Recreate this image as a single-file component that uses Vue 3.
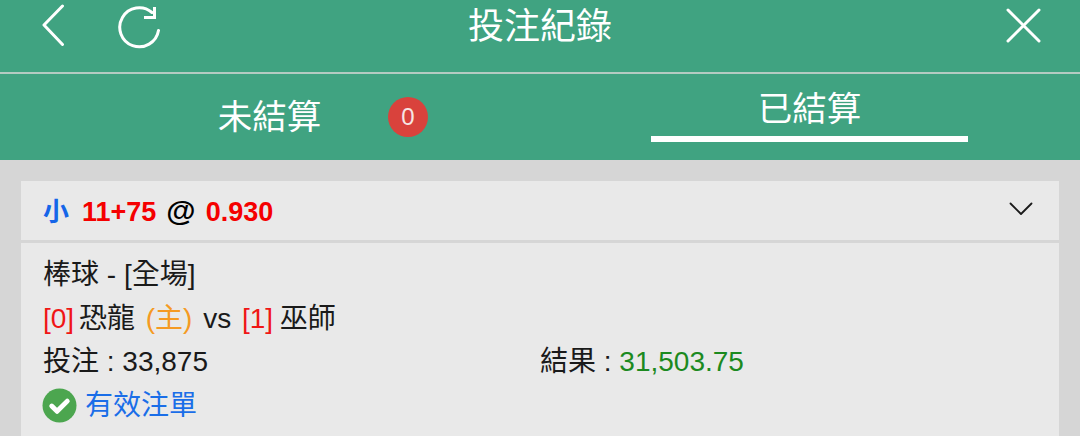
<script setup>
const title = '投注紀錄'
</script>

<template>
  <div class="page">
    <header class="topbar">
      <div class="left-icons">
        <svg class="ic back" width="24" height="42" viewBox="0 0 24 42" fill="none">
          <path d="M21.5 2 L3 21 L21.5 40.5" stroke="#fff" stroke-width="3" stroke-linecap="round" stroke-linejoin="round"/>
        </svg>
        <svg class="ic reload" width="46" height="46" viewBox="0 0 46 46" fill="none">
          <path d="M35 8.5 A19.5 19.5 0 1 0 41.5 26.5" stroke="#fff" stroke-width="3" stroke-linecap="round"/>
          <path d="M37.5 3 V13.5 H27" stroke="#fff" stroke-width="3" stroke-linecap="butt"/>
        </svg>
      </div>
      <h1 class="title">{{ title }}</h1>
      <svg class="ic close" width="36" height="36" viewBox="0 0 36 36" fill="none">
        <path d="M2 2 L33 33 M33 2 L2 33" stroke="#fff" stroke-width="3" stroke-linecap="round"/>
      </svg>
    </header>
    <nav class="tabs">
      <div class="tab">
        <span class="tab-label">未結算</span>
        <span class="badge">0</span>
      </div>
      <div class="tab active">
        <span class="tab-label">已結算</span>
      </div>
    </nav>
    <main class="content">
      <section class="card">
        <div class="card-head">
          <div class="bet">
            <span class="blue">小</span>
            <span class="red num">11+75</span>
            <span class="at">@</span>
            <span class="red">0.930</span>
          </div>
          <svg width="24" height="14" viewBox="0 0 24 14" fill="none">
            <path d="M1.5 1.5 L12 12 L22.5 1.5" stroke="#1a1a1a" stroke-width="1.8" stroke-linecap="round" stroke-linejoin="round"/>
          </svg>
        </div>
        <div class="card-body">
          <div class="line">棒球 - [全場]</div>
          <div class="line"><span class="r first">[0]</span> 恐龍 <span class="orange">(主)</span> vs <span class="r second">[1]</span> 巫師</div>
          <div class="line cols">
            <span class="col">投注 : 33,875</span>
            <span class="col">結果 : <span class="green">31,503.75</span></span>
          </div>
          <div class="line status">
            <svg width="35" height="35" viewBox="0 0 36 36">
              <circle cx="18" cy="18" r="17.5" fill="#4ca64f"/>
              <path d="M10 18.5 L15.5 24 L26 13.5" fill="none" stroke="#fff" stroke-width="5" stroke-linecap="round" stroke-linejoin="round"/>
            </svg>
            <span class="valid">有效注單</span>
          </div>
        </div>
      </section>
    </main>
  </div>
</template>

<style>
html, body { margin: 0; padding: 0; overflow: hidden; }
</style>

<style scoped>
.page {
  width: 1080px;
  height: 436px;
  overflow: hidden;
  background: #d6d6d6;
  display: flex;
  flex-direction: column;
  font-family: "Liberation Sans", "Noto Sans CJK TC", sans-serif;
  color: #1a1a1a;
}
.topbar {
  height: 72px;
  flex: none;
  background: #40a381;
  border-bottom: 2px solid #b4cbc2;
  position: relative;
  display: flex;
  align-items: center;
  justify-content: center;
}
.left-icons {
  position: absolute;
  left: 41px;
  top: 4px;
  display: flex;
  align-items: flex-start;
  gap: 52px;
}
.ic { display: block; }
.close { position: absolute; left: 1006px; top: 8px; }
.title {
  margin: 0 0 19px;
  font-size: 36px;
  line-height: 50px;
  font-weight: 400;
  color: #fff;
}
.tabs {
  height: 86px;
  flex: none;
  background: #40a381;
  display: flex;
}
.tab {
  flex: 1;
  position: relative;
  display: flex;
  justify-content: center;
  color: #fff;
  font-size: 34.5px;
}
.tab-label {
  line-height: 48px;
  margin-top: 19px;
  margin-right: 1px;
}
.tab.active .tab-label {
  width: 317px;
  height: 62px;
  margin-top: 0;
  margin-right: 1px;
  text-align: center;
  line-height: 71px;
  border-bottom: 6px solid #fff;
}
.badge {
  position: absolute;
  left: 388px;
  top: 23px;
  width: 40px;
  height: 40px;
  border-radius: 50%;
  background: #d9423c;
  color: #f6e6e4;
  font-size: 24px;
  line-height: 40px;
  text-align: center;
}
.content {
  flex: 1;
  display: flex;
  padding: 21px 22px 0 21px;
}
.card { flex: 1; background: #e9e9e9; }
.card-head {
  height: 59px;
  border-bottom: 3px solid #d6d6d6;
  display: flex;
  align-items: center;
  justify-content: space-between;
  padding: 0 26px 0 22px;
}
.card-head svg { margin-top: -3px; }
.bet {
  font-size: 27px;
  line-height: 36px;
  font-weight: 700;
  color: #000;
  display: flex;
  align-items: baseline;
  gap: 10px;
  margin-top: 1px;
}
.blue { color: #1565e8; font-size: 26px; }
.num { margin-left: 3px; }
.red { color: #f50000; }
.at { color: #000; font-size: 30px; }
.card-body {
  padding: 10px 22px 0;
  font-size: 28px;
  line-height: 43.5px;
}
.line { white-space: nowrap; }
.r { color: #f01616; }
.first { margin-right: -3px; }
.second { margin-left: 3px; margin-right: -1px; }
.orange { color: #f59a23; margin: 0 3px; }
.cols { display: flex; }
.col { width: 497px; }
.green { color: #1c8a1f; }
.status {
  display: flex;
  align-items: center;
  gap: 8px;
  margin-left: -1px;
}
.valid { color: #1a6ee8; }
</style>
